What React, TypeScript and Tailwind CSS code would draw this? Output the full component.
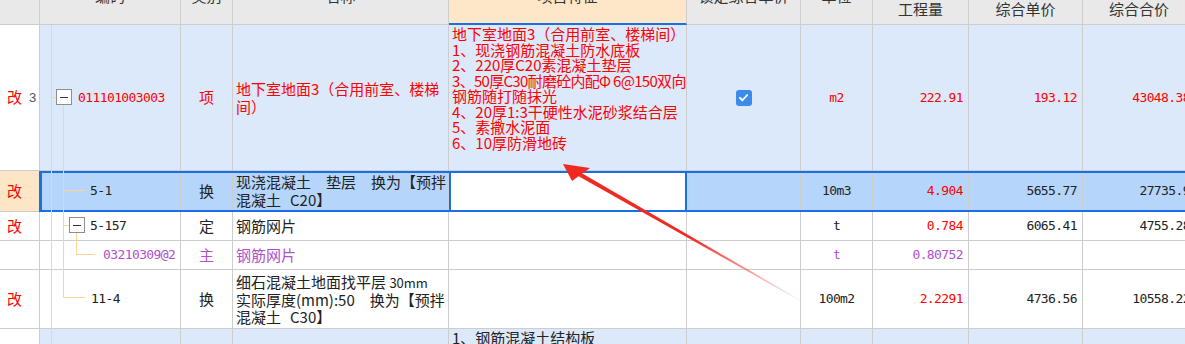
import React from 'react';

const grid = 'grid grid-cols-[40px_141px_52px_216px_238px_114px_72px_96px_114px_113px]';
const mono = "font-['DejaVu_Sans_Mono','Noto_Sans_CJK_SC',monospace] text-[13px] tracking-[-0.6px]";
const red = 'text-[#ff0000]';
const purple = 'text-[#b24fca]';
const blue = 'bg-[#dce9fb]';
const sel = 'bg-[#b6d5fb]';
const line = 'border-r border-b border-[#cdcdcd]';

type CellProps = { className?: string; edge?: string; children?: React.ReactNode };

function Cell({ className = '', edge = line, children }: CellProps) {
  return <div className={`flex items-center overflow-hidden ${edge} ${className}`}>{children}</div>;
}

// the third line is the long one, it gets squeezed a little so it fits the cell
const features = [
  { text: '地下室地面3（合用前室、楼梯间）', tight: false },
  { text: '1、现浇钢筋混凝土防水底板', tight: false },
  { text: '2、220厚C20素混凝土垫层', tight: false },
  { text: '3、50厚C30耐磨砼内配Φ 6@150双向', tight: true },
  { text: '钢筋随打随抹光', tight: false },
  { text: '4、20厚1:3干硬性水泥砂浆结合层', tight: false },
  { text: '5、素撒水泥面', tight: false },
  { text: '6、10厚防滑地砖', tight: false },
];

function Gap() {
  return <span className="inline-block w-[9px]" />;
}

function Header() {
  const top = 'items-start justify-center pt-[1px] bg-[#e9e9e9]';
  const bottom = 'items-end justify-center pb-[6px] bg-[#e9e9e9]';
  return (
    <div className={`${grid} h-[39px] text-[15px] leading-[18px] text-[#333]`}>
      <Cell className="bg-[#e9e9e9]" />
      <Cell className={top}>编码</Cell>
      <Cell className={top}>类别</Cell>
      <Cell className={top}>名称</Cell>
      <Cell className="items-start justify-center pt-[1px] bg-[#fde7c8]" edge="border-r border-b-2 border-r-[#cdcdcd] border-b-[#1b6fe6]">
        项目特征
      </Cell>
      <Cell className={top}>锁定综合单价</Cell>
      <Cell className={top}>单位</Cell>
      <Cell className={bottom}>工程量</Cell>
      <Cell className={bottom}>综合单价</Cell>
      <Cell className={bottom}>综合合价</Cell>
    </div>
  );
}

function Mod() {
  return <span className={`${red} text-[15px]`}>改</span>;
}

function TreeAndArrow() {
  const stroke = '#fdd39a';
  return (
    <svg className="absolute left-0 top-0 pointer-events-none" width="1185" height="344" viewBox="0 0 1185 344">
      <defs>
        <linearGradient id="arrowFade" gradientUnits="userSpaceOnUse" x1="803" y1="302" x2="690" y2="238">
          <stop offset="0" stopColor="#f02a22" stopOpacity="0" />
          <stop offset="1" stopColor="#f02a22" stopOpacity="1" />
        </linearGradient>
      </defs>
      <g stroke={stroke} strokeWidth="1" fill="none">
        <line x1="51.5" y1="25" x2="51.5" y2="344" />
        <line x1="63.5" y1="105" x2="63.5" y2="297.5" />
        <line x1="51" y1="97.5" x2="56" y2="97.5" />
        <line x1="64" y1="190.5" x2="85" y2="190.5" />
        <line x1="64" y1="225.5" x2="69" y2="225.5" />
        <line x1="76.5" y1="233" x2="76.5" y2="254.5" />
        <line x1="76" y1="254.5" x2="95" y2="254.5" />
        <line x1="63" y1="297.5" x2="85" y2="297.5" />
      </g>
      <g>
        <rect x="56.5" y="89.5" width="15" height="15" fill="#fff" stroke="#8e8e8e" />
        <line x1="60" y1="97.5" x2="68" y2="97.5" stroke="#333" />
        <rect x="69.5" y="217.5" width="15" height="15" fill="#fff" stroke="#8e8e8e" />
        <line x1="73" y1="225.5" x2="81" y2="225.5" stroke="#333" />
      </g>
      <polygon points="803.3,301.6 802.7,302.4 578.6,176.2 580.6,172.6" fill="url(#arrowFade)" />
      <polygon points="563,164 590,168 572,181" fill="#f02a22" />
    </svg>
  );
}

export default function App() {
  return (
    <div className="relative w-[1185px] h-[344px] overflow-hidden bg-white font-['Noto_Sans_CJK_SC','Noto_Sans',sans-serif] text-[#222]">
      <div className="-mt-[14px] w-[1196px]">
        <Header />

        <div className={`${grid} h-[146px]`}>
          <Cell className="bg-white pl-[7px]">
            <Mod />
            <span className="ml-[7px] text-[13px] text-[#555] font-['Liberation_Sans',sans-serif]">3</span>
          </Cell>
          <Cell className={`${blue} pl-[38px]`}>
            <span className={`${mono} ${red}`}>011101003003</span>
          </Cell>
          <Cell className={`${blue} justify-center text-[15px] ${red}`}>项</Cell>
          <Cell className={`${blue} pl-[3px] pr-[2px] text-[15px] leading-[18px] ${red}`}>
            <span>地下室地面3（合用前室、楼梯间）</span>
          </Cell>
          <Cell className={`${blue} flex-col !items-start pt-[1px] pl-[3px] text-[15px] leading-[15.5px] ${red}`}>
            {features.map((f) => (
              <span key={f.text} className={`whitespace-nowrap ${f.tight ? 'tracking-[-0.7px]' : ''}`}>
                {f.text}
              </span>
            ))}
          </Cell>
          <Cell className={`${blue} justify-center`}>
            <span className="w-[16px] h-[16px] rounded-[3px] bg-[#3b8beb] flex items-center justify-center">
              <svg width="11" height="11" viewBox="0 0 12 12">
                <path d="M2 6.3 L4.8 9 L10 3.3" stroke="#fff" strokeWidth="2" fill="none" strokeLinecap="round" strokeLinejoin="round" />
              </svg>
            </span>
          </Cell>
          <Cell className={`${blue} justify-center ${mono} ${red}`}>m2</Cell>
          <Cell className={`${blue} justify-end pr-[5px] ${mono} ${red}`}>222.91</Cell>
          <Cell className={`${blue} justify-end pr-[5px] ${mono} ${red}`}>193.12</Cell>
          <Cell className={`${blue} justify-end pr-[5px] ${mono} ${red}`}>43048.38</Cell>
        </div>

        <div className={`${grid} h-[41px] relative`}>
          <Cell className="bg-[#fde6c6] pl-[7px]">
            <Mod />
          </Cell>
          <Cell className={`${sel} pl-[50px]`}>
            <span className={mono}>5-1</span>
          </Cell>
          <Cell className={`${sel} justify-center text-[15px]`}>换</Cell>
          <Cell className={`${sel} pl-[3px] text-[15px] leading-[18px]`}>
            <span className="whitespace-nowrap">
              现浇混凝土　垫层　换为【预拌
              <br />
              混凝土<Gap />C20】
            </span>
          </Cell>
          <Cell className="bg-white" edge="border-2 border-[#1b6fe6]" />
          <Cell className={sel} />
          <Cell className={`${sel} justify-center ${mono}`}>10m3</Cell>
          <Cell className={`${sel} justify-end pr-[5px] ${mono} ${red}`}>4.904</Cell>
          <Cell className={`${sel} justify-end pr-[5px] ${mono}`}>5655.77</Cell>
          <Cell className={`${sel} justify-end pr-[5px] ${mono}`}>27735.9</Cell>
          <div className="absolute top-0 bottom-0 left-[39px] right-0 border-2 border-l-[3px] border-[#1b6fe6] pointer-events-none" />
        </div>

        <div className={`${grid} h-[29px]`}>
          <Cell className="pl-[7px]">
            <Mod />
          </Cell>
          <Cell className="pl-[50px]">
            <span className={mono}>5-157</span>
          </Cell>
          <Cell className="justify-center text-[15px]">定</Cell>
          <Cell className="pl-[3px] text-[15px]">钢筋网片</Cell>
          <Cell />
          <Cell />
          <Cell className={`justify-center ${mono}`}>t</Cell>
          <Cell className={`justify-end pr-[5px] ${mono} ${red}`}>0.784</Cell>
          <Cell className={`justify-end pr-[5px] ${mono}`}>6065.41</Cell>
          <Cell className={`justify-end pr-[5px] ${mono}`}>4755.28</Cell>
        </div>

        <div className={`${grid} h-[29px]`}>
          <Cell />
          <Cell className="pl-[63px]">
            <span className={`${mono} ${purple}`}>03210309@2</span>
          </Cell>
          <Cell className={`justify-center text-[15px] ${purple}`}>主</Cell>
          <Cell className={`pl-[3px] text-[15px] ${purple}`}>钢筋网片</Cell>
          <Cell />
          <Cell />
          <Cell className={`justify-center ${mono} ${purple}`}>t</Cell>
          <Cell className={`justify-end pr-[5px] ${mono} ${purple}`}>0.80752</Cell>
          <Cell />
          <Cell />
        </div>

        <div className={`${grid} h-[59px]`}>
          <Cell className="pl-[7px]">
            <Mod />
          </Cell>
          <Cell className="pl-[51px]">
            <span className={mono}>11-4</span>
          </Cell>
          <Cell className="justify-center text-[15px]">换</Cell>
          <Cell className="pl-[3px] text-[15px] leading-[17px]">
            <span className="whitespace-nowrap">
              细石混凝土地面找平层 <span className="text-[13px]">30mm</span>
              <br />
              实际厚度(mm):50　换为【预拌
              <br />
              混凝土<Gap />C30】
            </span>
          </Cell>
          <Cell />
          <Cell />
          <Cell className={`justify-center ${mono}`}>100m2</Cell>
          <Cell className={`justify-end pr-[5px] ${mono} ${red}`}>2.2291</Cell>
          <Cell className={`justify-end pr-[5px] ${mono}`}>4736.56</Cell>
          <Cell className={`justify-end pr-[5px] ${mono}`}>10558.22</Cell>
        </div>

        <div className={`${grid} h-[40px]`}>
          <Cell className="bg-white" />
          <Cell className={blue} />
          <Cell className={blue} />
          <Cell className={blue} />
          <Cell className={`${blue} !items-start pt-[1px] pl-[3px] text-[15px] leading-[15.5px]`}>
            1、钢筋混凝土结构板
          </Cell>
          <Cell className={blue} />
          <Cell className={blue} />
          <Cell className={blue} />
          <Cell className={blue} />
          <Cell className={blue} />
        </div>
      </div>
      <TreeAndArrow />
    </div>
  );
}
